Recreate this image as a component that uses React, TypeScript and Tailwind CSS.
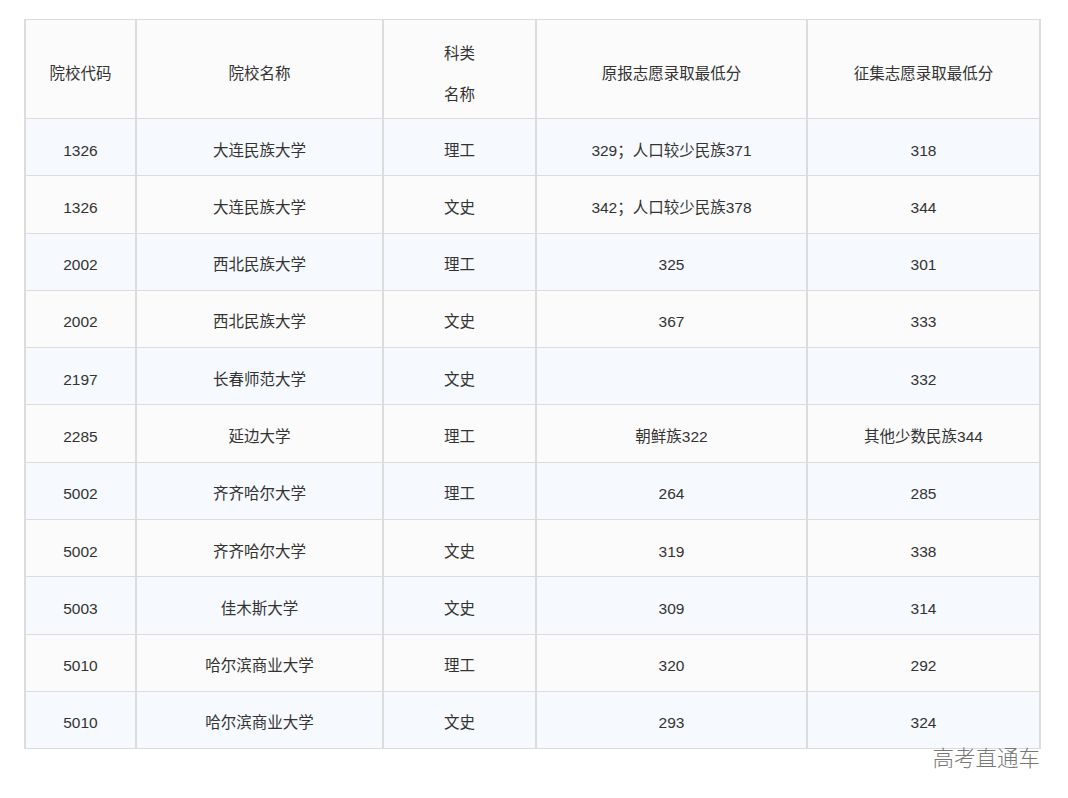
const rows: [string, string, string, string, string][] = [
  ["1326", "大连民族大学", "理工", "329；人口较少民族371", "318"],
  ["1326", "大连民族大学", "文史", "342；人口较少民族378", "344"],
  ["2002", "西北民族大学", "理工", "325", "301"],
  ["2002", "西北民族大学", "文史", "367", "333"],
  ["2197", "长春师范大学", "文史", "", "332"],
  ["2285", "延边大学", "理工", "朝鲜族322", "其他少数民族344"],
  ["5002", "齐齐哈尔大学", "理工", "264", "285"],
  ["5002", "齐齐哈尔大学", "文史", "319", "338"],
  ["5003", "佳木斯大学", "文史", "309", "314"],
  ["5010", "哈尔滨商业大学", "理工", "320", "292"],
  ["5010", "哈尔滨商业大学", "文史", "293", "324"],
];

const cell = "border-x-2 border-y-[1.5px] border-[#dcdcdc] text-center align-middle p-0";

export default function App() {
  return (
    <div className="min-h-screen w-full bg-white font-['Liberation_Sans','Noto_Sans_CJK_SC',sans-serif] text-[15.5px] text-[#333]">
      <div className="pt-[19px] pl-[24px] w-[1040px]">
        <table className="table-fixed border-collapse w-[1015px]">
          <colgroup>
            <col className="w-[111px]" />
            <col className="w-[247px]" />
            <col className="w-[153px]" />
            <col className="w-[271px]" />
            <col className="w-[233px]" />
          </colgroup>
          <thead>
            <tr className="bg-[#fbfbfb] h-[99px]">
              <th className={`${cell} font-normal pt-[9px]`}>院校代码</th>
              <th className={`${cell} font-normal pt-[9px]`}>院校名称</th>
              <th className={`${cell} font-normal leading-[41px] pt-[9px]`}>
                科类
                <br />
                名称
              </th>
              <th className={`${cell} font-normal pt-[9px]`}>原报志愿录取最低分</th>
              <th className={`${cell} font-normal pt-[9px]`}>征集志愿录取最低分</th>
            </tr>
          </thead>
          <tbody>
            {rows.map((r, i) => (
              <tr key={i} className={`h-[57.3px] ${i % 2 === 0 ? "bg-[#f6f9fe]" : "bg-[#fbfbfb]"}`}>
                {r.map((v, j) => (
                  <td key={j} className={`${cell} pt-[6px]`}>
                    {v}
                  </td>
                ))}
              </tr>
            ))}
          </tbody>
        </table>
        <div className="flex justify-end -mt-[4px] pr-0">
          <span className="text-[21.5px] leading-[24px] text-[#777] font-['Noto_Sans_CJK_SC',sans-serif] font-light">
            高考直通车
          </span>
        </div>
      </div>
    </div>
  );
}
